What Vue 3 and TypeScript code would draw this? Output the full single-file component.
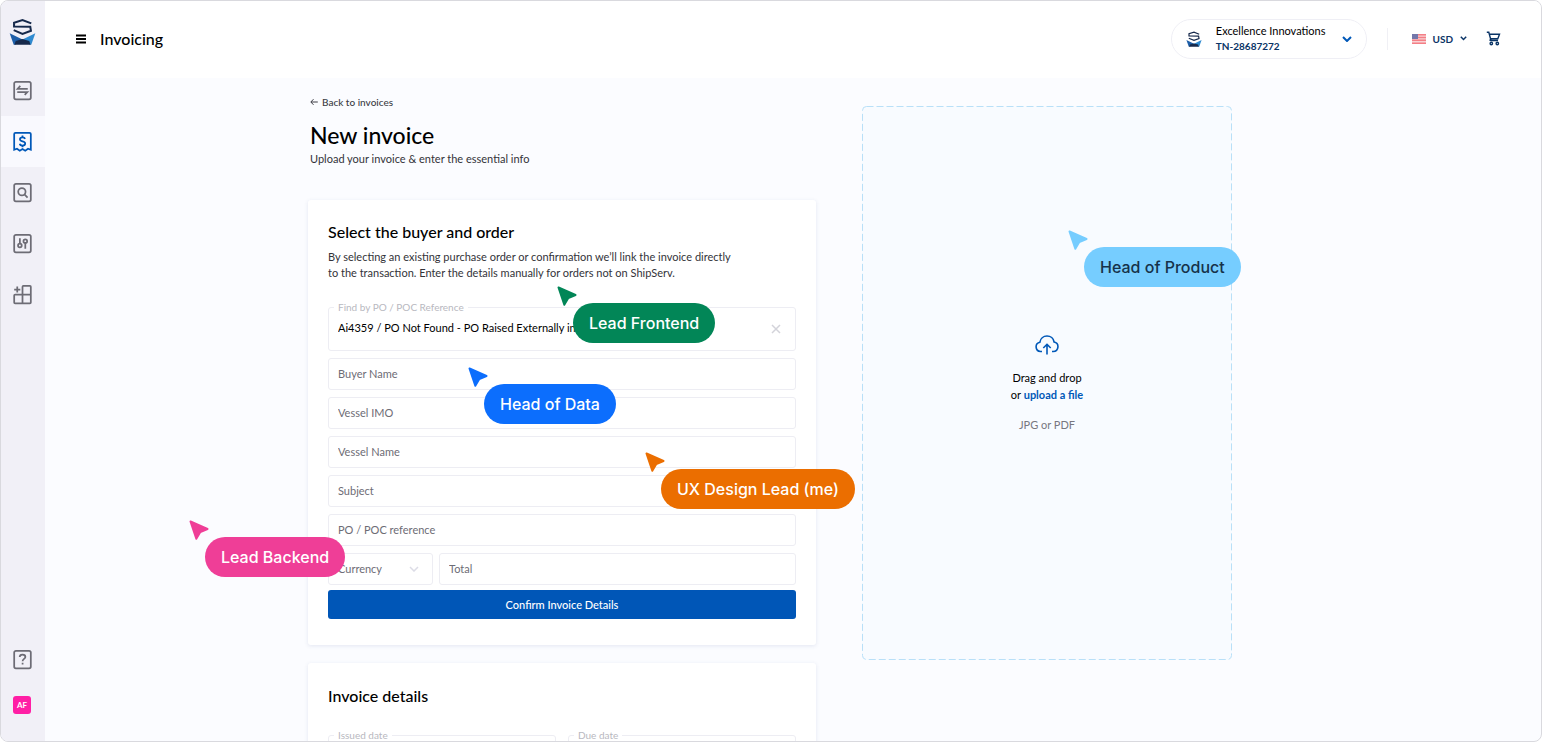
<script setup lang="ts">
import { ref } from 'vue'

interface NavItem {
  id: string
  label: string
  paths: string[]
}

interface Collaborator {
  name: string
  color: string
  text: string
  x: number
  y: number
}

const frame = 'M4.5 2h15a2 2 0 0 1 2 2v16a2 2 0 0 1-2 2h-15a2 2 0 0 1-2-2v-16a2 2 0 0 1 2-2z'

const navItems: NavItem[] = [
  { id: 'orders', label: 'Orders', paths: [frame, 'M18 10H6.5l3-3.2', 'M6 13.8h11.5l-3 3.2'] },
  {
    id: 'invoicing',
    label: 'Invoicing',
    paths: [
      'M2.5 21.5V3.5a1.5 1.5 0 0 1 1.5-1.5h16a1.5 1.5 0 0 1 1.500 1.500v18l-3.200-1.300-3.200 2.300-3.100-2-3.100 2-3.200-2.300z',
      'M15 9c-.4-1.2-1.5-1.8-3-1.8-1.700 0-2.900.8-2.900 2.200 0 3.200 6 1.600 6 4.900 0 1.400-1.300 2.300-3.100 2.300-1.700 0-2.900-.8-3.200-2.100',
      'M12 5.200v2M12 16.600v2',
    ],
  },
  {
    id: 'search',
    label: 'Search',
    paths: [frame, 'M11.300 7a4.200 4.200 0 1 1 0 8.400a4.200 4.200 0 1 1 0-8.400z', 'M14.500 14.500l3.300 3.300'],
  },
  {
    id: 'settings',
    label: 'Settings',
    paths: [
      frame,
      'M9 6v6M9 16.200v.8',
      'M9 12.200a2.100 2.100 0 1 1 0 4.200a2.100 2.100 0 1 1 0-4.200z',
      'M15.200 11.500V18',
      'M15.200 7.200a2.100 2.100 0 1 1 0 4.200a2.100 2.100 0 1 1 0-4.200z',
    ],
  },
  {
    id: 'apps',
    label: 'Add app',
    paths: ['M12 12V3a1 1 0 0 1 1-1h7.500a1 1 0 0 1 1 1v18a1 1 0 0 1-1 1h-17a1 1 0 0 1-1-1v-8a1 1 0 0 1 1-1h18M12 12v10', 'M6 2.800v7M2.500 6.300h7'],
  },
]

const activeId = ref('invoicing')

const textFields = [
  { id: 'buyer', label: 'Buyer Name' },
  { id: 'imo', label: 'Vessel IMO' },
  { id: 'vessel', label: 'Vessel Name' },
  { id: 'subject', label: 'Subject' },
  { id: 'po', label: 'PO / POC reference' },
]

const reference = ref('Ai4359 / PO Not Found - PO Raised Externally in ERP')

const collaborators: Collaborator[] = [
  { name: 'Head of Product', color: '#76cdff', text: '#16324a', x: 1068, y: 230 },
  { name: 'Lead Frontend', color: '#028657', text: '#ffffff', x: 557, y: 286 },
  { name: 'Head of Data', color: '#0c6efd', text: '#ffffff', x: 468, y: 367 },
  { name: 'UX Design Lead (me)', color: '#eb6e00', text: '#ffffff', x: 645, y: 452 },
  { name: 'Lead Backend', color: '#ef3e97', text: '#ffffff', x: 189, y: 520 },
]
</script>

<template>
  <div class="window">
    <svg class="symbols" aria-hidden="true">
      <symbol id="ship-logo" viewBox="28 56 80 80">
        <path d="M94 72 68 62 43 70V81L91 82 93 94 68 103 42 92" fill="none" stroke="#16294b" stroke-width="6" />
        <path d="M30 101 68 120 46 135H42z" fill="#1d5ea8" />
        <path d="M106 101 68 120 90 135H94z" fill="#2f8ad0" />
        <path d="M44 135 48 124 68 118 88 124 92 135z" fill="#16294b" />
      </symbol>
    </svg>

    <aside class="sidebar">
      <a class="logo" href="#" aria-label="Home">
        <svg width="27" height="27"><use href="#ship-logo" /></svg>
      </a>
      <nav class="nav" aria-label="Main">
        <a
          v-for="item in navItems"
          :key="item.id"
          href="#"
          class="nav-item"
          :class="{ active: item.id === activeId }"
          :aria-label="item.label"
          @click.prevent="activeId = item.id"
        >
          <svg width="21" height="21" viewBox="0 0 24 24">
            <path v-for="d in item.paths" :key="d" :d="d" />
          </svg>
        </a>
      </nav>
      <div class="sidebar-foot">
        <button class="help" type="button" aria-label="Help">
          <svg width="21" height="21" viewBox="0 0 24 24">
            <path :d="frame" />
            <path d="M8.800 9.200c0-1.800 1.300-2.900 3.200-2.900s3.300 1.100 3.300 2.800c0 2.300-3.200 2.200-3.200 4.800M12.100 15.800v2" />
          </svg>
        </button>
        <button class="avatar" type="button">AF</button>
      </div>
    </aside>

    <div class="page">
      <header class="topbar">
        <button class="menu" type="button" aria-label="Menu">
          <svg width="12" height="12" viewBox="0 0 12 12"><path d="M1 2.500h10M1 6h10M1 9.500h10" /></svg>
        </button>
        <h1 class="section">Invoicing</h1>
        <button class="company" type="button">
          <svg width="16" height="18"><use href="#ship-logo" /></svg>
          <span class="company-text">
            <span class="company-name">Excellence Innovations</span>
            <strong class="company-id">TN-28687272</strong>
          </span>
          <svg class="chev" width="10" height="6" viewBox="0 0 10 6"><path d="M1 1l4 4 4-4" /></svg>
        </button>
        <span class="divider"></span>
        <button class="currency-switch" type="button">
          <svg class="flag" width="14" height="10" viewBox="0 0 14 10">
            <rect width="14" height="10" rx="1" fill="#f9d3d5" stroke="none" />
            <path d="M0 .7h14M0 3.500h14M0 6.300h14M0 9.200h14" stroke="#f47f86" stroke-width="1.400" />
            <rect width="6" height="5" fill="#7478ab" stroke="none" />
          </svg>
          <span>USD</span>
          <svg class="chev small" width="7" height="5" viewBox="0 0 7 5"><path d="M.8.8l2.700 2.700 2.700-2.700" /></svg>
        </button>
        <button class="cart" type="button" aria-label="Cart">
          <svg width="15" height="15" viewBox="0 0 15 15">
            <path d="M.8 1.200h2l2.200 8.300h7M3.300 3.200h10.200l-1.700 4.500H4.600M4.600 7.700l-.7 2.200" />
            <circle cx="5.300" cy="12.500" r="1.200" />
            <circle cx="11.300" cy="12.500" r="1.200" />
          </svg>
        </button>
      </header>

      <main class="content">
        <div class="left">
          <a class="back" href="#">
            <svg width="8" height="8" viewBox="0 0 8 8"><path d="M7.800 4H1M3.500 1.200.8 4l2.700 2.800" /></svg>
            Back to invoices
          </a>
          <h2 class="title">New invoice</h2>
          <p class="subtitle">Upload your invoice &amp; enter the essential info</p>

          <form class="card" @submit.prevent>
            <h3>Select the buyer and order</h3>
            <p class="lead">
              By selecting an existing purchase order or confirmation we’ll link the invoice directly to the
              transaction. Enter the details manually for orders not on ShipServ.
            </p>
            <div class="outlined tall">
              <label for="find">Find by PO / POC Reference</label>
              <input id="find" v-model="reference" type="text" />
              <button type="button" class="clear" aria-label="Clear" @click="reference = ''">
                <svg width="10" height="10" viewBox="0 0 10 10"><path d="M1 1l8 8M9 1L1 9" /></svg>
              </button>
            </div>
            <input
              v-for="field in textFields"
              :key="field.id"
              class="field"
              type="text"
              :placeholder="field.label"
              :aria-label="field.label"
            />
            <div class="amount">
              <div class="select-wrap">
                <select class="field" aria-label="Currency">
                  <option>Currency</option>
                </select>
                <svg width="10" height="6" viewBox="0 0 10 6"><path d="M1 1l4 4 4-4" /></svg>
              </div>
              <input class="field" type="text" placeholder="Total" aria-label="Total" />
            </div>
            <button class="confirm" type="submit">Confirm Invoice Details</button>
          </form>

          <section class="card details">
            <h3>Invoice details</h3>
            <div class="dates">
              <div class="outlined">
                <label for="issued">Issued date</label>
                <input id="issued" type="text" />
              </div>
              <div class="outlined">
                <label for="due">Due date</label>
                <input id="due" type="text" />
              </div>
            </div>
          </section>
        </div>

        <section class="dropzone">
          <svg class="dashes" aria-hidden="true"><rect x="0.500" y="0.500" rx="4" /></svg>
          <svg class="cloud" width="24" height="20" viewBox="0 0 24 20">
            <path d="M7 16.500H5.500A4.700 4.700 0 0 1 4.900 7.200C5.400 3.600 8.300 1 12 1c3.600 0 6.500 2.500 7.100 6a4.800 4.800 0 0 1-.9 9.500H17M12 19.500V9.500M8.300 13 12 9.300l3.700 3.700" />
          </svg>
          <p class="drop-text">
            Drag and drop<br />or <label class="upload" for="invoice-file">upload a file</label>
          </p>
          <input id="invoice-file" class="file" type="file" accept=".jpg,.pdf" />
          <p class="hint">JPG or PDF</p>
        </section>
      </main>
    </div>

    <div
      v-for="person in collaborators"
      :key="person.name"
      class="pin"
      :style="{ left: person.x + 'px', top: person.y + 'px', color: person.color }"
    >
      <svg width="20" height="21" viewBox="0 0 20 21">
        <path d="M1.500 1.500 18.500 9 11.300 12 7.300 18.800z" />
      </svg>
      <span class="chip" :style="{ background: person.color }">
        <span :style="{ color: person.text }">{{ person.name }}</span>
      </span>
    </div>
  </div>
</template>

<style>
body {
  margin: 0;
  background: #fff;
}
</style>

<style scoped>
* {
  box-sizing: border-box;
}

.window {
  position: relative;
  display: flex;
  height: 100vh;
  overflow: hidden;
  border: 1px solid #d9d9de;
  border-radius: 8px;
  background: #fbfcff;
  color: #000;
  font-family: Lato, 'Liberation Sans', sans-serif;
  font-size: 11px;
  line-height: 16px;
}

h1,
h2,
h3,
p {
  margin: 0;
}

h1,
h2,
h3 {
  font-weight: 500;
}

button,
input,
select {
  padding: 0;
  border: 0;
  background: none;
  color: inherit;
  font: inherit;
}

a {
  color: inherit;
  text-decoration: none;
}

svg {
  display: block;
  flex: none;
  fill: none;
  stroke: currentColor;
}

.symbols {
  position: absolute;
  width: 0;
  height: 0;
}

use {
  stroke: none;
}

.sidebar {
  display: flex;
  flex: none;
  flex-direction: column;
  width: 44px;
  background: #f1f0f7;
  color: #6d6c75;
}

.logo {
  display: flex;
  justify-content: center;
  height: 64px;
  padding: 17px 1px 0 0;
}

.nav-item {
  display: flex;
  align-items: center;
  justify-content: center;
  height: 51px;
  padding-right: 2px;
}

.nav-item.active {
  background: #f9f9fe;
  color: #0058b8;
}

.nav-item svg,
.help svg {
  stroke-width: 2;
}

.sidebar-foot {
  display: flex;
  flex-direction: column;
  align-items: center;
  gap: 26px;
  margin-top: auto;
  padding: 0 2px 27px 0;
}

.avatar {
  width: 18px;
  height: 18px;
  border-radius: 3px;
  background: #ff1fa5;
  color: #fff;
  font-size: 8px;
  font-weight: 700;
  line-height: 18px;
}

.page {
  display: flex;
  flex: 1;
  flex-direction: column;
  min-width: 0;
}

.topbar {
  display: flex;
  flex: none;
  align-items: center;
  height: 77px;
  padding: 0 40px 2px 30px;
  background: #fff;
}

.menu svg {
  stroke-width: 2;
}

.section {
  margin-left: 13px;
  font-size: 16px;
  line-height: 24px;
}

.company {
  display: flex;
  align-items: center;
  height: 40px;
  margin-left: auto;
  padding: 0 14px;
  border: 1px solid #efeff5;
  border-radius: 20px;
  text-align: left;
}

.company-text {
  display: flex;
  flex-direction: column;
  margin: 0 17px 0 14px;
  line-height: 15px;
}

.company-id {
  color: #0a3466;
  font-size: 10px;
  line-height: 16px;
}

.chev {
  color: #0058b8;
  stroke-width: 2;
}

.divider {
  width: 1px;
  height: 22px;
  margin: 0 24px 0 20px;
  background: #f0f0f5;
}

.currency-switch {
  display: flex;
  align-items: center;
  color: #0a3466;
  font-size: 10px;
  font-weight: 700;
}

.flag {
  margin-right: 6px;
}

.chev.small {
  margin-left: 7px;
  color: #0a3466;
  stroke-width: 1.5;
}

.cart {
  margin-left: 19px;
  color: #0a3466;
}

.cart svg {
  stroke-width: 1.4;
}

.content {
  display: grid;
  flex: 1;
  grid-template-columns: minmax(0, 508px) minmax(0, 370px);
  gap: 46px;
  justify-content: center;
  align-items: start;
  min-height: 0;
  padding: 16px 46px 0 0;
}

.left {
  display: flex;
  flex-direction: column;
}

.back {
  display: flex;
  align-items: center;
  align-self: flex-start;
  gap: 4px;
  margin-left: 2px;
  color: #3c3c44;
  font-size: 10px;
  font-weight: 500;
}

.title {
  margin: 9px 0 0 2px;
  font-size: 23px;
  line-height: 32px;
}

.subtitle {
  margin: 0 0 33px 2px;
  color: #333339;
}

.card {
  display: flex;
  flex-direction: column;
  gap: 7px;
  padding: 20px 20px 26px;
  border-radius: 3px;
  background: #fff;
  box-shadow: 0 1px 4px rgba(60, 70, 140, 0.12);
}

.card h3 {
  font-size: 16px;
  line-height: 24px;
}

.lead {
  max-width: 412px;
  margin: -2px 0 19px;
  color: #333339;
}

.details {
  margin-top: 18px;
  padding-top: 21px;
}

.outlined {
  position: relative;
  display: flex;
  align-items: center;
  height: 44px;
  padding: 0 14px 0 9px;
  border: 1px solid #ededf3;
  border-radius: 3px;
}

.outlined label {
  position: absolute;
  top: -7px;
  left: 5px;
  padding: 0 4px;
  background: #fff;
  color: #b8b8c0;
  font-size: 10px;
  line-height: 12px;
}

.outlined input {
  flex: 1;
  min-width: 0;
  padding-bottom: 2px;
}

.clear {
  color: #d3d3da;
}

.clear svg {
  stroke-width: 1.5;
}

.field {
  width: 100%;
  height: 32px;
  padding: 0 9px;
  border: 1px solid #ededf3;
  border-radius: 3px;
  color: #6d6c75;
}

input.field {
  padding-bottom: 2px;
}

.field::placeholder {
  color: #6d6c75;
  opacity: 1;
}

.amount {
  display: grid;
  grid-template-columns: 105fr 357fr;
  gap: 6px;
}

.select-wrap {
  position: relative;
}

.select-wrap select {
  appearance: none;
}

.select-wrap svg {
  position: absolute;
  top: 13px;
  right: 14px;
  color: #dcdce6;
  stroke-width: 1.5;
  pointer-events: none;
}

.confirm {
  height: 29px;
  margin-top: -2px;
  border-radius: 3px;
  background: #0056b7;
  color: #fff;
  font-weight: 500;
}

.dates {
  display: grid;
  grid-template-columns: 1fr 1fr;
  gap: 12px;
  margin-top: 20px;
}

.dropzone {
  position: relative;
  display: flex;
  flex-direction: column;
  align-items: center;
  height: 554px;
  margin-top: 12px;
  padding-top: 229px;
  border-radius: 4px;
  background: #f8fbff;
  text-align: center;
}

.dashes {
  position: absolute;
  inset: 0;
  width: 100%;
  height: 100%;
  color: #b9e0f8;
}

.dashes rect {
  width: calc(100% - 1px);
  height: calc(100% - 1px);
  stroke-dasharray: 7 3;
}

.cloud {
  color: #0058b8;
  stroke-width: 1.6;
}

.drop-text {
  margin-top: 14px;
  line-height: 17px;
}

.upload {
  color: #0058b8;
  font-weight: 700;
}

.file {
  position: absolute;
  width: 1px;
  height: 1px;
  opacity: 0;
}

.hint {
  margin-top: 14px;
  color: #77777f;
}

.pin {
  position: absolute;
  margin: -1px 0 0 -1px;
}

.pin > svg {
  fill: currentColor;
  stroke-width: 2;
  stroke-linejoin: round;
}

.chip {
  display: block;
  margin: -4px 0 0 16px;
  padding: 0 16px;
  border-radius: 20px;
  font-family: Inter, 'Liberation Sans', sans-serif;
  font-size: 16px;
  font-weight: 500;
  line-height: 40px;
  white-space: nowrap;
}
</style>
